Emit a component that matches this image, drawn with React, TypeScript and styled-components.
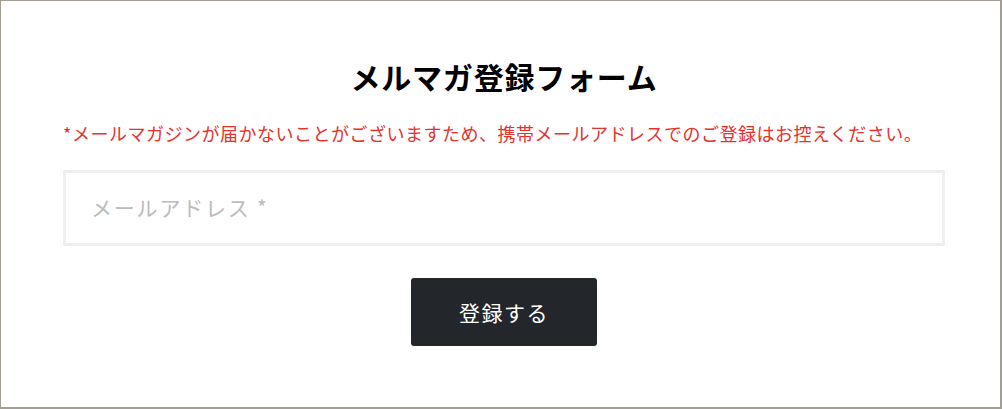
import React from 'react'
import styled, { createGlobalStyle } from 'styled-components'

const GlobalStyle = createGlobalStyle`
  html, body {
    margin: 0;
    padding: 0;
    background: #ffffff;
  }
  * {
    box-sizing: border-box;
  }
`

const Frame = styled.div`
  width: 1002px;
  height: 409px;
  border: 1px solid #a39d94;
  border-right-width: 2px;
  border-bottom-width: 2px;
  background: #ffffff;
  padding: 50px 55px 0 62px;
  font-family: 'Noto Sans CJK JP', 'Noto Sans', sans-serif;
`

const Title = styled.h2`
  margin: 0;
  text-align: center;
  font-size: 30px;
  font-weight: 700;
  line-height: 50px;
  color: #000000;
  letter-spacing: 0.8px;
`

const Notice = styled.p`
  margin: 18px 0 0 0;
  font-size: 18px;
  line-height: 28px;
  color: #e8312d;
  letter-spacing: 0.5px;
`

const Form = styled.form`
  display: flex;
  flex-direction: column;
  align-items: center;
  margin-top: 23px;
`

const EmailInput = styled.input`
  width: 100%;
  height: 76px;
  border: 3px solid #eef0f0;
  border-radius: 0;
  padding: 0 25px 3px;
  font-family: 'Noto Sans CJK JP', 'Noto Sans', sans-serif;
  font-size: 21px;
  letter-spacing: 1.8px;
  color: #333333;
  outline: none;

  &::placeholder {
    color: #bcbcbc;
  }
`

const SubmitButton = styled.button`
  margin-top: 32px;
  width: 186px;
  height: 68px;
  border: none;
  border-radius: 3px;
  background: #23272b;
  color: #ffffff;
  font-family: 'Noto Sans CJK JP', 'Noto Sans', sans-serif;
  font-size: 21px;
  letter-spacing: 1.5px;
  cursor: pointer;
`

export default function App() {
  return (
    <>
      <GlobalStyle />
      <Frame>
        <Title>メルマガ登録フォーム</Title>
        <Notice>
          *メールマガジンが届かないことがございますため、携帯メールアドレスでのご登録はお控えください。
        </Notice>
        <Form onSubmit={(e) => e.preventDefault()}>
          <EmailInput type="email" placeholder="メールアドレス *" />
          <SubmitButton type="submit">登録する</SubmitButton>
        </Form>
      </Frame>
    </>
  )
}
